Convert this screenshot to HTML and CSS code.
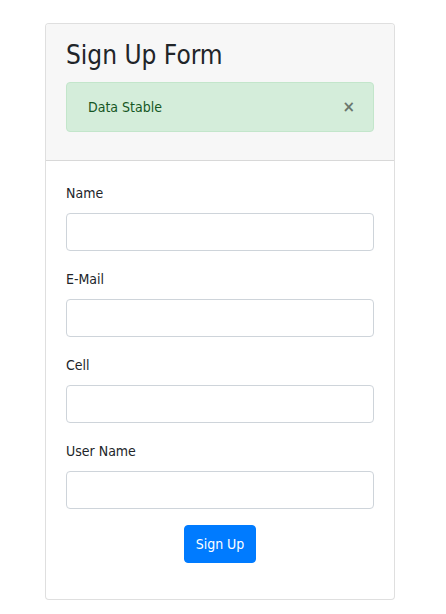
FILE: index.html
```html
<!DOCTYPE html>
<html>
<head>
<meta charset="utf-8">
<link rel="stylesheet" href="styles.css">
</head>
<body>
<div class="page">
  <div class="card">
    <div class="card-header">
      <h2 class="title">Sign Up Form</h2>
      <div class="alert">
        <span>Data Stable</span>
        <button class="close" type="button">&times;</button>
      </div>
    </div>
    <div class="card-body">
      <div class="form-group">
        <label>Name</label>
        <input class="form-control" type="text">
      </div>
      <div class="form-group">
        <label>E-Mail</label>
        <input class="form-control" type="text">
      </div>
      <div class="form-group">
        <label>Cell</label>
        <input class="form-control" type="text">
      </div>
      <div class="form-group">
        <label>User Name</label>
        <input class="form-control" type="text">
      </div>
      <div class="form-group center">
        <button class="btn" type="button">Sign Up</button>
      </div>
    </div>
  </div>
</div>
</body>
</html>
```

FILE: styles.css
```css
* { box-sizing: border-box; }
html, body { margin: 0; padding: 0; background: #fff; }
body {
  font-family: "DejaVu Sans Condensed", "DejaVu Sans", sans-serif;
  font-size: 14px;
  line-height: 24px;
  color: #212529;
}
.page {
  padding: 23px 0 0 45px;
}
.card {
  width: 350px;
  border: 1px solid rgba(0,0,0,.125);
  border-radius: 4px;
  background: #fff;
}
.card-header {
  background: #f7f7f7;
  border-bottom: 1px solid rgba(0,0,0,.125);
  padding: 12px 20px 28px;
  border-radius: 3px 3px 0 0;
}
.title {
  margin: 0 0 8px;
  font-size: 26px;
  font-weight: 400;
  line-height: 38px;
  color: #212529;
}
.alert {
  display: flex;
  align-items: center;
  justify-content: space-between;
  height: 50px;
  padding: 0 20px 0 21px;
  background: #d4edda;
  border: 1px solid #c3e6cb;
  border-radius: 4px;
  color: #155724;
  font-size: 14px;
}
.close {
  border: 0;
  background: none;
  padding: 0;
  font-family: "DejaVu Sans", sans-serif;
  font-size: 15px;
  font-weight: 700;
  line-height: 1;
  color: #000;
  opacity: .5;
  margin-right: -2px;
}
.card-body {
  padding: 20px 20px 20px;
}
.form-group {
  margin-bottom: 16px;
}
.form-group label {
  display: block;
  margin-bottom: 8px;
  font-size: 14px;
}
.form-control {
  display: block;
  width: 100%;
  height: 38px;
  border: 1px solid #ced4da;
  border-radius: 4px;
  background: #fff;
  margin: 0;
}
.center {
  display: flex;
  justify-content: center;
}
.btn {
  height: 38px;
  padding: 0 11px;
  border: 1px solid #007bff;
  border-radius: 4px;
  background: #007bff;
  color: #fff;
  font-family: inherit;
  font-size: 14px;
  margin: 0;
}
```
